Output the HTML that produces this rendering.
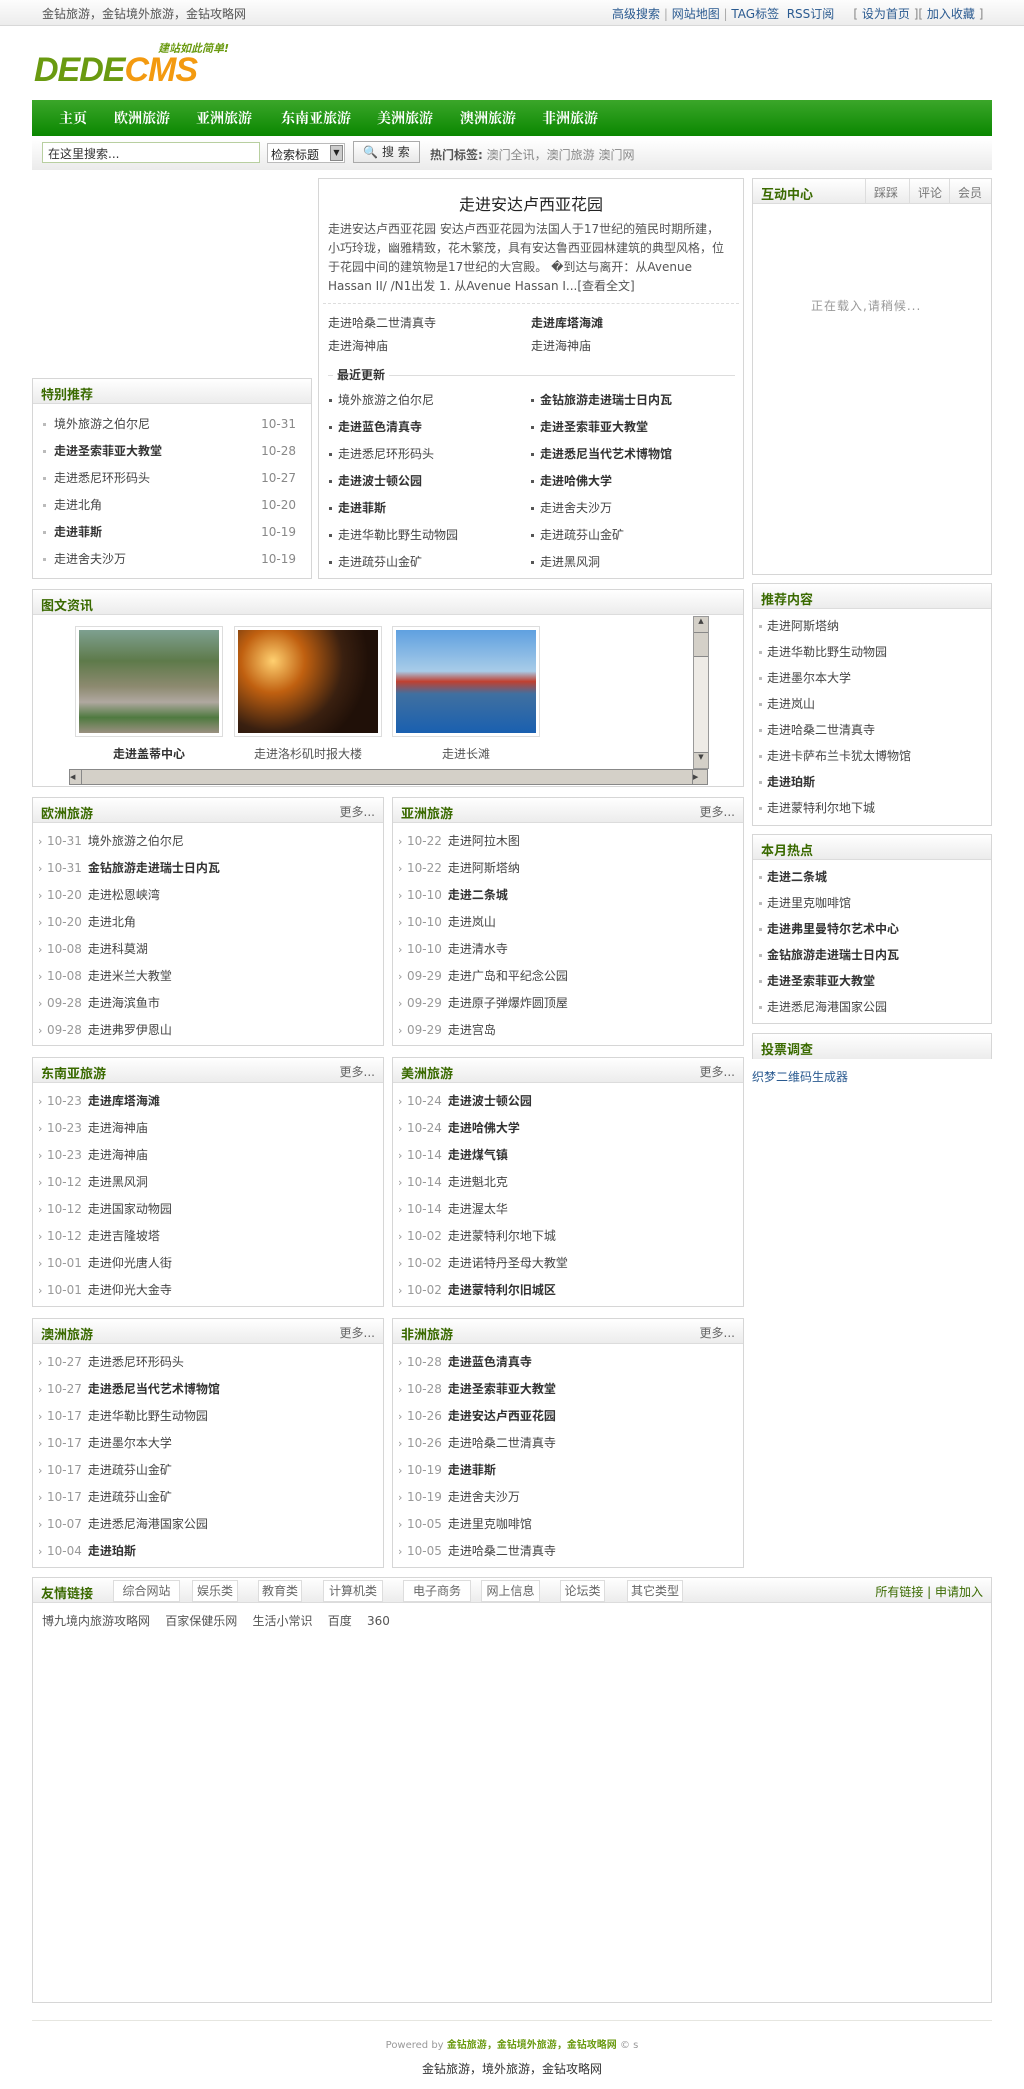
<!DOCTYPE html>
<html><head><meta charset="utf-8"><style>
*{margin:0;padding:0;box-sizing:border-box}
body{width:1024px;height:2089px;position:relative;background:#fff;font:12px "DejaVu Sans","Liberation Sans","Noto Sans CJK SC",sans-serif;color:#444;overflow:hidden}
.a{position:absolute}
.box{position:absolute;border:1px solid #d6d6d6;background:#fff}
.hd{height:25px;background:linear-gradient(#fff,#ececec);border-bottom:1px solid #dcdcdc;position:relative}
.hd b{position:absolute;left:8px;top:5px;color:#3a6a00;font-size:13px;font-weight:bold}
.hd .more{position:absolute;right:8px;top:5px;color:#666}
ul{list-style:none}
.ls li{height:27px;line-height:27px;padding-left:14px;position:relative;white-space:nowrap}
.ls li:before{content:"";position:absolute;left:6px;top:12px;width:3px;height:3px;background:#bbb}
.ls .d{color:#999;margin-right:6px}
.bd{font-weight:bold;color:#333}
.r{position:absolute;right:15px;color:#888}
.ar li:before{content:"›";background:none;width:auto;height:auto;top:0;left:5px;color:#999;font-size:11px}
.cl li{height:27px;line-height:27px;width:202px;float:left;padding-left:10px;position:relative;white-space:nowrap}
.cl li:before{content:"";position:absolute;left:1px;top:12px;width:3px;height:3px;background:#555}
.rl li{height:26px;line-height:26px}
.lp li{padding-left:21px}
.lp li:before{left:10px}
</style></head><body>
<div class="a" style="left:0;top:0;width:1024px;height:26px;background:linear-gradient(#fdfdfd,#ececec);border-bottom:1px solid #d8d8d8"></div>
<div class="a" style="left:42px;top:5px;color:#555">金钻旅游，金钻境外旅游，金钻攻略网</div>
<div class="a" style="left:612px;top:5px;color:#2a5a90;white-space:nowrap">高级搜索 <span style="color:#aaa">|</span> 网站地图 <span style="color:#aaa">|</span> TAG标签&nbsp; RSS订阅 &nbsp;&nbsp;&nbsp; <span style="color:#888">[</span> 设为首页 <span style="color:#888">][</span> 加入收藏 <span style="color:#888">]</span></div>
<div class="a" style="left:34px;top:40px;width:212px;height:48px">
<div class="a" style="left:124px;top:0;color:#6a9a10;font-style:italic;font-weight:bold;font-size:11px">建站如此简单!</div>
<div class="a" style="left:0;top:12px;font:italic bold 34px/36px 'Liberation Sans',sans-serif;color:#6a9a10;letter-spacing:-1px">DEDE<span style="color:#f39a10">CMS</span></div></div>
<div class="a" style="left:32px;top:100px;width:960px;height:36px;background:linear-gradient(#3ba62a,#0a8700)"></div>
<div class="a" style="left:0;top:108px;color:#fff;font:bold 14px 'Noto Serif CJK SC','Noto Sans CJK SC',serif;white-space:nowrap">
<span class="a" style="left:59px">主页</span><span class="a" style="left:114px">欧洲旅游</span><span class="a" style="left:196px">亚洲旅游</span><span class="a" style="left:281px">东南亚旅游</span><span class="a" style="left:377px">美洲旅游</span><span class="a" style="left:460px">澳洲旅游</span><span class="a" style="left:542px">非洲旅游</span></div>
<div class="a" style="left:32px;top:139px;width:960px;height:31px;background:linear-gradient(#fff,#ebebeb)"></div>
<div class="a" style="left:42px;top:142px;width:218px;height:21px;border:1px solid #b8cfa0;background:#fff;padding:2px 5px;color:#333">在这里搜索...</div>
<div class="a" style="left:267px;top:143px;width:78px;height:20px;border:1px solid #bbb;background:#fff;padding:2px 3px;color:#222">检索标题<span class="a" style="right:1px;top:1px;width:13px;height:16px;background:#ccc;border:1px solid #888;font-size:8px;text-align:center;line-height:14px">▼</span></div>
<div class="a" style="left:353px;top:141px;width:67px;height:22px;border:1px solid #aaa;background:linear-gradient(#fff,#e8e8e8);text-align:center;line-height:20px;color:#333">🔍 搜 索</div>
<div class="a" style="left:430px;top:146px;color:#888;white-space:nowrap"><b style="color:#555">热门标签:</b> 澳门全讯，澳门旅游 澳门网</div>

<div class="box" style="left:32px;top:378px;width:280px;height:201px">
<div class="hd"><b>特别推荐</b></div>
<ul class="ls lp" style="padding-top:7px">
<li>境外旅游之伯尔尼<span class="r">10-31</span></li>
<li><span class="bd">走进圣索菲亚大教堂</span><span class="r">10-28</span></li>
<li>走进悉尼环形码头<span class="r">10-27</span></li>
<li>走进北角<span class="r">10-20</span></li>
<li><span class="bd">走进菲斯</span><span class="r">10-19</span></li>
<li>走进舍夫沙万<span class="r">10-19</span></li></ul></div>

<div class="box" style="left:318px;top:178px;width:426px;height:401px">
<div class="a" style="left:0;width:100%;top:12px;text-align:center;font-size:16px;color:#222">走进安达卢西亚花园</div>
<div class="a" style="left:9px;top:41px;width:398px;line-height:19px;color:#555">走进安达卢西亚花园 安达卢西亚花园为法国人于17世纪的殖民时期所建，小巧玲珑，幽雅精致，花木繁茂，具有安达鲁西亚园林建筑的典型风格，位于花园中间的建筑物是17世纪的大宫殿。 �到达与离开：从Avenue Hassan II/ /N1出发 1. 从Avenue Hassan I...[查看全文]</div>
<div class="a" style="left:4px;top:124px;width:416px;border-top:1px dashed #ddd"></div>
<div class="a" style="left:9px;top:133px;line-height:23px">走进哈桑二世清真寺<br>走进海神庙</div>
<div class="a" style="left:212px;top:133px;line-height:23px"><span class="bd">走进库塔海滩</span><br>走进海神庙</div>
<div class="a" style="left:9px;top:196px;width:407px;border-top:1px solid #ddd"></div>
<div class="a" style="left:14px;top:187px;background:#fff;padding:0 4px;font-weight:bold;color:#333">最近更新</div>
<ul class="cl a" style="left:9px;top:208px;width:410px">
<li>境外旅游之伯尔尼</li><li class="bd">金钻旅游走进瑞士日内瓦</li>
<li class="bd">走进蓝色清真寺</li><li class="bd">走进圣索菲亚大教堂</li>
<li>走进悉尼环形码头</li><li class="bd">走进悉尼当代艺术博物馆</li>
<li class="bd">走进波士顿公园</li><li class="bd">走进哈佛大学</li>
<li class="bd">走进菲斯</li><li>走进舍夫沙万</li>
<li>走进华勒比野生动物园</li><li>走进疏芬山金矿</li>
<li>走进疏芬山金矿</li><li>走进黑风洞</li></ul></div>

<div class="box" style="left:752px;top:178px;width:240px;height:397px">
<div class="hd"><b>互动中心</b>
<span class="a" style="left:112px;top:0;height:25px;border-left:1px solid #ddd;padding:5px 8px;color:#777">踩踩</span>
<span class="a" style="left:156px;top:0;height:25px;border-left:1px solid #ddd;padding:5px 8px;color:#777">评论</span>
<span class="a" style="left:196px;top:0;height:25px;border-left:1px solid #ddd;padding:5px 8px;color:#777">会员</span></div>
<div class="a" style="left:58px;top:118px;color:#999;letter-spacing:1px">正在载入,请稍候...</div></div>

<div class="box" style="left:32px;top:589px;width:712px;height:198px">
<div class="hd"><b>图文资讯</b></div>
<div class="a" style="left:42px;top:36px;width:148px;height:111px;border:1px solid #ddd;padding:3px;background:#fff"><div style="height:100%;background:linear-gradient(#7ea090,#5e7a4a 30%,#8d8a70 55%,#b0a8a0 70%,#4f7a40 85%,#9a9080)"></div></div>
<div class="a" style="left:201px;top:36px;width:148px;height:111px;border:1px solid #ddd;padding:3px"><div style="height:100%;background:radial-gradient(circle at 25% 30%,#ffd070 0,#c06010 25%,#3a2010 55%,#201008 75%),linear-gradient(#201008,#d07010)"></div></div>
<div class="a" style="left:359px;top:36px;width:148px;height:111px;border:1px solid #ddd;padding:3px"><div style="height:100%;background:linear-gradient(#5fa0e0,#a8cce8 40%,#c04030 50%,#4070a0 62%,#1a60b0 100%)"></div></div>
<div class="a" style="left:42px;top:155px;width:148px;text-align:center;font-weight:bold;color:#333">走进盖蒂中心</div>
<div class="a" style="left:201px;top:155px;width:148px;text-align:center;color:#555">走进洛杉矶时报大楼</div>
<div class="a" style="left:359px;top:155px;width:148px;text-align:center;color:#555">走进长滩</div>
<div class="a" style="left:660px;top:26px;width:16px;height:153px;background:#eeebe6;border:1px solid #999"><div style="height:16px;background:#d4d0c8;border-bottom:1px solid #888;font-size:7px;text-align:center">▲</div><div style="height:24px;background:#d4d0c8;border-bottom:1px solid #888"></div><div class="a" style="bottom:0;width:14px;height:16px;background:#d4d0c8;border-top:1px solid #888;font-size:7px;text-align:center">▼</div></div>
<div class="a" style="left:36px;top:179px;width:624px;height:16px;background:#d4d0c8;border:1px solid #888"><span class="a" style="left:0;width:12px;height:14px;border-right:1px solid #888;font-size:7px;line-height:14px">◀</span><span class="a" style="right:-16px;width:16px;height:16px;top:-1px;background:#d4d0c8;border:1px solid #888;font-size:7px;line-height:14px">▶</span></div></div>

<div class="box" style="left:752px;top:583px;width:240px;height:243px">
<div class="hd"><b>推荐内容</b></div>
<ul class="ls rl" style="padding-top:4px"><li>走进阿斯塔纳</li><li>走进华勒比野生动物园</li><li>走进墨尔本大学</li><li>走进岚山</li><li>走进哈桑二世清真寺</li><li>走进卡萨布兰卡犹太博物馆</li><li class="bd">走进珀斯</li><li>走进蒙特利尔地下城</li></ul></div>
<div class="box" style="left:752px;top:834px;width:240px;height:190px">
<div class="hd"><b>本月热点</b></div>
<ul class="ls rl" style="padding-top:4px"><li class="bd">走进二条城</li><li>走进里克咖啡馆</li><li class="bd">走进弗里曼特尔艺术中心</li><li class="bd">金钻旅游走进瑞士日内瓦</li><li class="bd">走进圣索菲亚大教堂</li><li>走进悉尼海港国家公园</li></ul></div>
<div class="box" style="left:752px;top:1033px;width:240px;height:26px;border-bottom:2px solid #d6d6d6"><div class="hd" style="border:0"><b>投票调查</b></div></div>
<div class="a" style="left:752px;top:1068px;color:#2a5a90">织梦二维码生成器</div>

<div class="box" style="left:32px;top:797px;width:352px;height:249px"><div class="hd"><b>欧洲旅游</b><span class="more">更多...</span></div>
<ul class="ls ar" style="padding-top:5px"><li><span class="d">10-31</span>境外旅游之伯尔尼</li><li><span class="d">10-31</span><span class="bd">金钻旅游走进瑞士日内瓦</span></li><li><span class="d">10-20</span>走进松恩峡湾</li><li><span class="d">10-20</span>走进北角</li><li><span class="d">10-08</span>走进科莫湖</li><li><span class="d">10-08</span>走进米兰大教堂</li><li><span class="d">09-28</span>走进海滨鱼市</li><li><span class="d">09-28</span>走进弗罗伊恩山</li></ul></div>
<div class="box" style="left:392px;top:797px;width:352px;height:249px"><div class="hd"><b>亚洲旅游</b><span class="more">更多...</span></div>
<ul class="ls ar" style="padding-top:5px"><li><span class="d">10-22</span>走进阿拉木图</li><li><span class="d">10-22</span>走进阿斯塔纳</li><li><span class="d">10-10</span><span class="bd">走进二条城</span></li><li><span class="d">10-10</span>走进岚山</li><li><span class="d">10-10</span>走进清水寺</li><li><span class="d">09-29</span>走进广岛和平纪念公园</li><li><span class="d">09-29</span>走进原子弹爆炸圆顶屋</li><li><span class="d">09-29</span>走进宫岛</li></ul></div>
<div class="box" style="left:32px;top:1057px;width:352px;height:250px"><div class="hd"><b>东南亚旅游</b><span class="more">更多...</span></div>
<ul class="ls ar" style="padding-top:5px"><li><span class="d">10-23</span><span class="bd">走进库塔海滩</span></li><li><span class="d">10-23</span>走进海神庙</li><li><span class="d">10-23</span>走进海神庙</li><li><span class="d">10-12</span>走进黑风洞</li><li><span class="d">10-12</span>走进国家动物园</li><li><span class="d">10-12</span>走进吉隆坡塔</li><li><span class="d">10-01</span>走进仰光唐人街</li><li><span class="d">10-01</span>走进仰光大金寺</li></ul></div>
<div class="box" style="left:392px;top:1057px;width:352px;height:250px"><div class="hd"><b>美洲旅游</b><span class="more">更多...</span></div>
<ul class="ls ar" style="padding-top:5px"><li><span class="d">10-24</span><span class="bd">走进波士顿公园</span></li><li><span class="d">10-24</span><span class="bd">走进哈佛大学</span></li><li><span class="d">10-14</span><span class="bd">走进煤气镇</span></li><li><span class="d">10-14</span>走进魁北克</li><li><span class="d">10-14</span>走进渥太华</li><li><span class="d">10-02</span>走进蒙特利尔地下城</li><li><span class="d">10-02</span>走进诺特丹圣母大教堂</li><li><span class="d">10-02</span><span class="bd">走进蒙特利尔旧城区</span></li></ul></div>
<div class="box" style="left:32px;top:1318px;width:352px;height:250px"><div class="hd"><b>澳洲旅游</b><span class="more">更多...</span></div>
<ul class="ls ar" style="padding-top:5px"><li><span class="d">10-27</span>走进悉尼环形码头</li><li><span class="d">10-27</span><span class="bd">走进悉尼当代艺术博物馆</span></li><li><span class="d">10-17</span>走进华勒比野生动物园</li><li><span class="d">10-17</span>走进墨尔本大学</li><li><span class="d">10-17</span>走进疏芬山金矿</li><li><span class="d">10-17</span>走进疏芬山金矿</li><li><span class="d">10-07</span>走进悉尼海港国家公园</li><li><span class="d">10-04</span><span class="bd">走进珀斯</span></li></ul></div>
<div class="box" style="left:392px;top:1318px;width:352px;height:250px"><div class="hd"><b>非洲旅游</b><span class="more">更多...</span></div>
<ul class="ls ar" style="padding-top:5px"><li><span class="d">10-28</span><span class="bd">走进蓝色清真寺</span></li><li><span class="d">10-28</span><span class="bd">走进圣索菲亚大教堂</span></li><li><span class="d">10-26</span><span class="bd">走进安达卢西亚花园</span></li><li><span class="d">10-26</span>走进哈桑二世清真寺</li><li><span class="d">10-19</span><span class="bd">走进菲斯</span></li><li><span class="d">10-19</span>走进舍夫沙万</li><li><span class="d">10-05</span>走进里克咖啡馆</li><li><span class="d">10-05</span>走进哈桑二世清真寺</li></ul></div>

<div class="box" style="left:32px;top:1577px;width:960px;height:426px"><div class="hd"><b>友情链接</b><span class="more" style="color:#3a6a00">所有链接 | 申请加入</span></div>
<div class="a" style="left:9px;top:34px;color:#555;white-space:nowrap">博九境内旅游攻略网 &nbsp;&nbsp; 百家保健乐网 &nbsp;&nbsp; 生活小常识 &nbsp;&nbsp; 百度 &nbsp;&nbsp; 360</div></div>
<div class="a" style="top:1580px;left:0;color:#666;white-space:nowrap">
<span class="a" style="left:113px;width:67px;height:22px;border:1px solid #ddd;background:#fff;text-align:center;line-height:20px">综合网站</span>
<span class="a" style="left:192px;width:46px;height:22px;border:1px solid #ddd;background:#fff;text-align:center;line-height:20px">娱乐类</span>
<span class="a" style="left:258px;width:44px;height:22px;border:1px solid #ddd;background:#fff;text-align:center;line-height:20px">教育类</span>
<span class="a" style="left:323px;width:60px;height:22px;border:1px solid #ddd;background:#fff;text-align:center;line-height:20px">计算机类</span>
<span class="a" style="left:403px;width:68px;height:22px;border:1px solid #ddd;background:#fff;text-align:center;line-height:20px">电子商务</span>
<span class="a" style="left:481px;width:59px;height:22px;border:1px solid #ddd;background:#fff;text-align:center;line-height:20px">网上信息</span>
<span class="a" style="left:560px;width:45px;height:22px;border:1px solid #ddd;background:#fff;text-align:center;line-height:20px">论坛类</span>
<span class="a" style="left:627px;width:56px;height:22px;border:1px solid #ddd;background:#fff;text-align:center;line-height:20px">其它类型</span></div>

<div class="a" style="left:32px;top:2020px;width:960px;border-top:1px solid #e6e6e0"></div>
<div class="a" style="left:0;width:1024px;top:2036px;text-align:center;font-size:10px;color:#999">Powered by <b style="color:#6a9a10">金钻旅游，金钻境外旅游，金钻攻略网</b> © s</div>
<div class="a" style="left:0;width:1024px;top:2060px;text-align:center;color:#333">金钻旅游，境外旅游，金钻攻略网</div>
</body></html>
